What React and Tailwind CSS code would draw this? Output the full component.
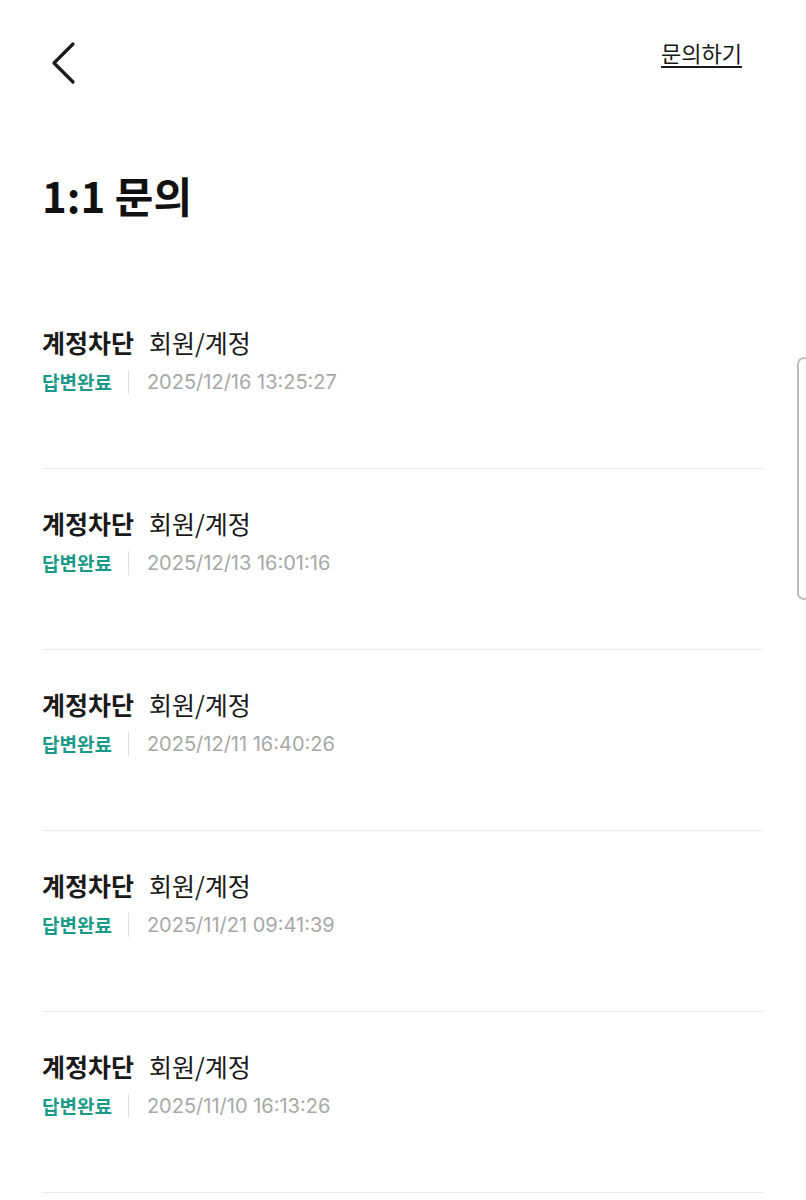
import React from 'react';

const font = { fontFamily: '"Noto Sans CJK KR", "Noto Sans", sans-serif' };
const dateFont = { fontFamily: 'Inter, "Noto Sans CJK KR", sans-serif' };

const inquiries = [
    { title: '계정차단', category: '회원/계정', status: '답변완료', date: '2025/12/16 13:25:27' },
    { title: '계정차단', category: '회원/계정', status: '답변완료', date: '2025/12/13 16:01:16' },
    { title: '계정차단', category: '회원/계정', status: '답변완료', date: '2025/12/11 16:40:26' },
    { title: '계정차단', category: '회원/계정', status: '답변완료', date: '2025/11/21 09:41:39' },
    { title: '계정차단', category: '회원/계정', status: '답변완료', date: '2025/11/10 16:13:26' },
];

function BackIcon() {
    return (
        <svg width="26" height="44" viewBox="0 0 26 44" fill="none">
            <path d="M23 3 L4 22 L23 41" stroke="#1a1a1a" strokeWidth="3.2" strokeLinecap="round" strokeLinejoin="round" />
        </svg>
    );
}

function InquiryRow({ item }) {
    return (
        <div className="h-[181px] border-b border-[#ececec] pt-[40px]">
            <div className="flex items-center h-[28px] text-[25px] leading-[28px] text-[#1a1a1a]">
                <span className="font-bold">{item.title}</span>
                <span className="ml-[15px]">{item.category}</span>
            </div>
            <div className="flex items-center mt-[14px] h-[24px] text-[19px] leading-[24px]">
                <span className="font-bold text-[#1b9a87]">{item.status}</span>
                <span className="ml-[16px] mr-[18px] w-px h-[24px] bg-[#e2e2e2]" />
                <span className="text-[20px] text-[#a8a8a8]" style={dateFont}>{item.date}</span>
            </div>
        </div>
    );
}

export default function App() {
    return (
        <div className="relative w-[806px] min-h-[1200px] bg-white overflow-hidden" style={font}>
            {/* Header */}
            <div className="flex items-center justify-between h-[60px] mt-[33px] pl-[50px] pr-[64px]">
                <BackIcon />
                <span className="text-[22px] text-[#1a1a1a] underline underline-offset-[4px] decoration-[1.5px] -mt-[22px]">문의하기</span>
            </div>

            {/* Title */}
            <h1 className="mt-[77px] ml-[42px] text-[42px] leading-[50px] font-bold text-[#111]">1:1 문의</h1>

            {/* List */}
            <div className="mt-[68px] ml-[42px] mr-[42px]">
                {inquiries.map((item, i) => (
                    <InquiryRow key={i} item={item} />
                ))}
            </div>

            {/* scroll indicator */}
            <div className="absolute left-[797px] top-[357px] w-[14px] h-[243px] rounded-[8px] border-2 border-[#bdbdbd] bg-white" />
        </div>
    );
}
